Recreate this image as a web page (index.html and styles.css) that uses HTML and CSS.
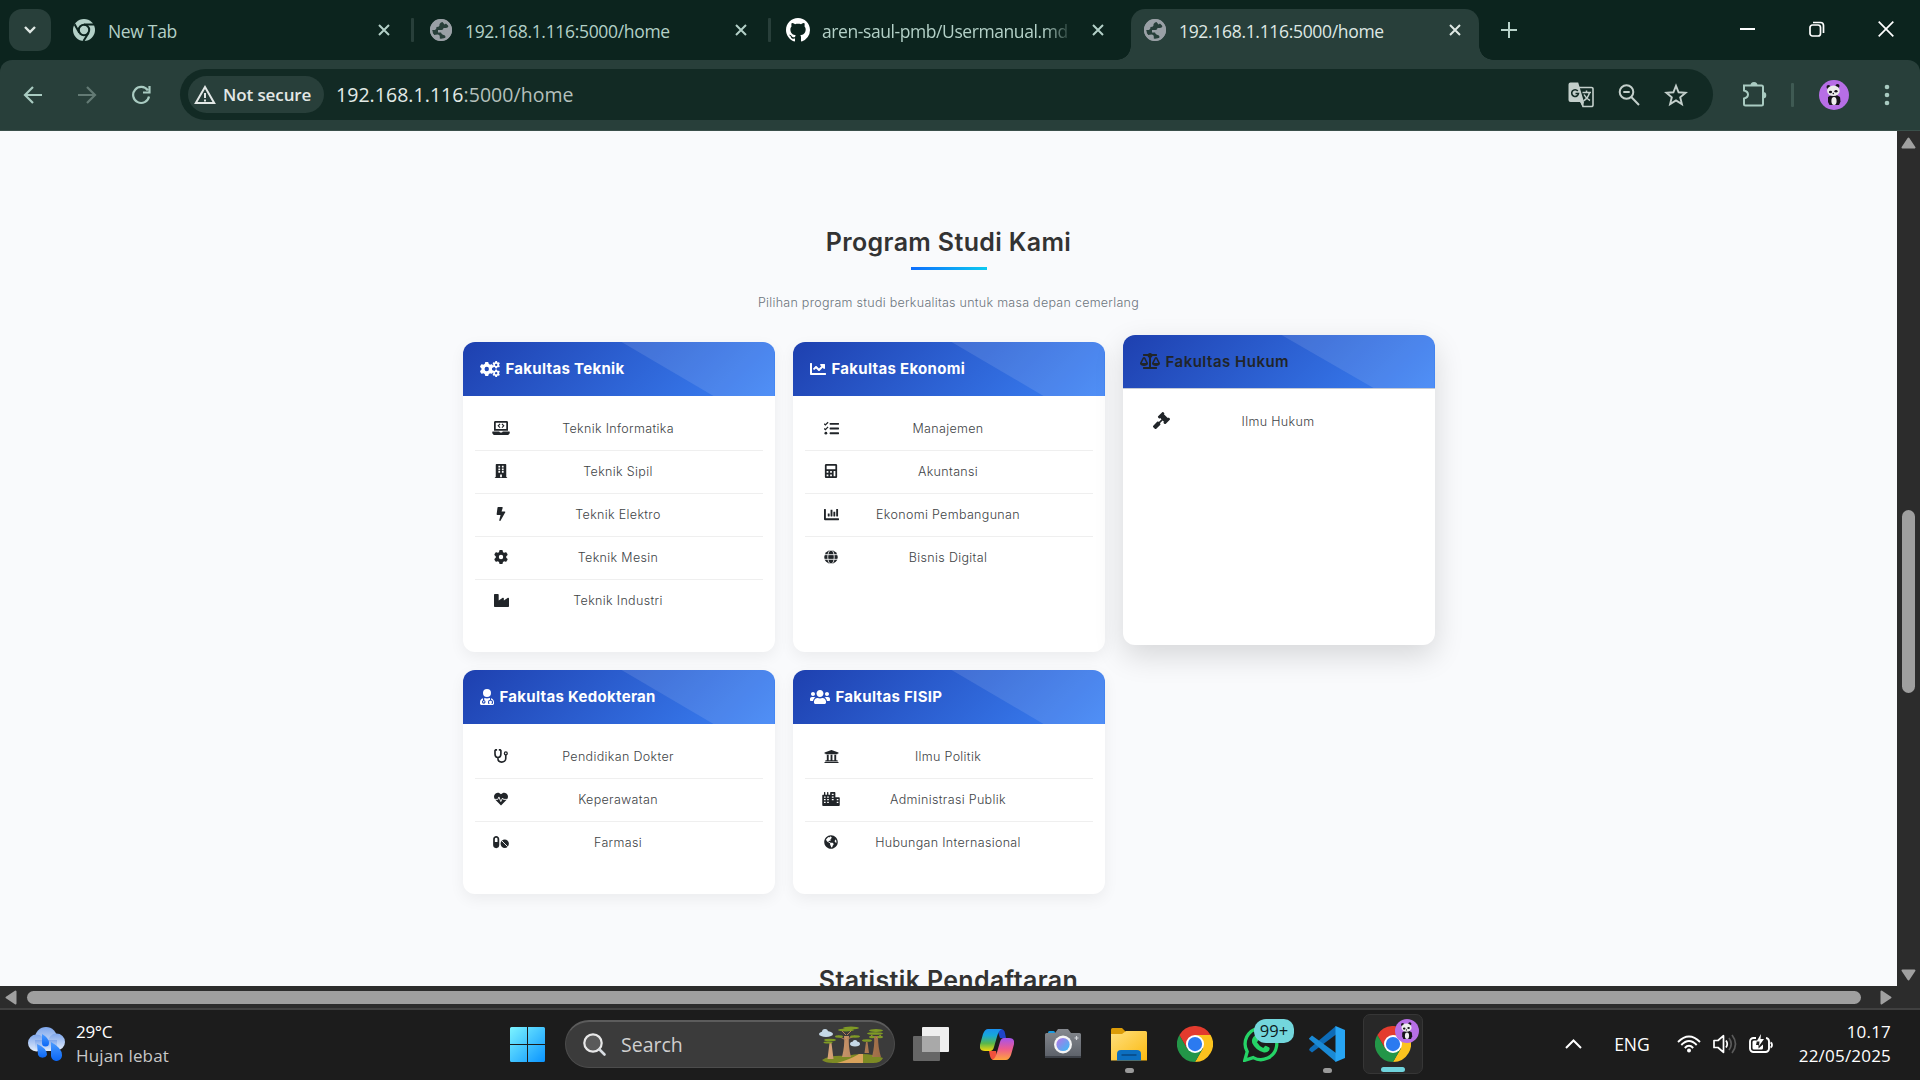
FILE: index.html
```html
<!DOCTYPE html>
<html lang="id">
<head>
<meta charset="utf-8">
<title>192.168.1.116:5000/home</title>
<link rel="stylesheet" href="styles.css">
</head>
<body>
<svg class="defs" width="0" height="0" aria-hidden="true">
  <defs>
    <symbol id="i-close" viewBox="0 0 14 14"><path d="M2 2l10 10M12 2L2 12" fill="none" stroke="currentColor" stroke-width="2"/></symbol>
    <symbol id="i-earth" viewBox="0 0 496 512"><path fill="currentColor" d="M248 8C111.03 8 0 119.03 0 256s111.03 248 248 248 248-111.03 248-248S384.97 8 248 8zm82.29 357.6c-3.9 3.88-7.99 7.95-11.31 11.28-2.99 3-5.1 6.7-6.17 10.71-1.51 5.66-2.73 11.38-4.77 16.87l-17.39 46.85c-13.76 3-28 4.69-42.65 4.69v-27.38c1.69-12.62-7.64-36.26-22.63-51.25-6-6-9.37-14.14-9.37-22.63v-32.01c0-11.64-6.27-22.34-16.46-27.97-14.37-7.95-34.81-19.06-48.81-26.11-11.48-5.78-22.1-13.14-31.65-21.75l-.8-.72a114.792 114.792 0 0 1-18.06-20.74c-9.38-13.77-24.66-36.42-34.59-51.14 20.47-45.5 57.36-82.04 103.2-101.89l24.01 12.01C203.48 89.74 216 82.01 216 70.11v-11.3c7.99-1.29 16.12-2.11 24.39-2.42l28.3 28.3c6.25 6.25 6.25 16.38 0 22.63L264 112l-10.34 10.34c-3.12 3.12-3.12 8.19 0 11.31l4.69 4.69c3.12 3.12 3.12 8.19 0 11.31l-8 8a8.008 8.008 0 0 1-5.66 2.34h-8.99c-2.08 0-4.08.81-5.58 2.27l-9.92 9.65a8.008 8.008 0 0 0-1.58 9.31l15.59 31.19c2.66 5.32-1.21 11.58-7.15 11.58h-5.64c-1.93 0-3.79-.7-5.24-1.96l-9.28-8.06a16.017 16.017 0 0 0-15.55-3.1l-31.17 10.39a11.95 11.95 0 0 0-8.17 11.34c0 4.53 2.56 8.66 6.61 10.69l11.08 5.54c9.41 4.71 19.79 7.16 30.31 7.16s22.59 27.29 32 32h66.75c8.49 0 16.62 3.37 22.63 9.37l13.69 13.69a30.503 30.503 0 0 1 8.93 21.57 46.536 46.536 0 0 1-13.72 32.98zM417 274.25c-5.79-1.45-10.84-5-14.15-9.97l-17.98-26.97a23.97 23.97 0 0 1 0-26.62l19.59-29.38c2.32-3.47 5.5-6.29 9.24-8.15l12.98-6.49C440.2 193.59 448 223.87 448 256c0 8.67-.74 17.16-1.82 25.54L417 274.25z"/></symbol>
    <symbol id="i-tabglobe" viewBox="0 0 22 22"><circle cx="11" cy="11" r="11" fill="#9aa0a6"/><path d="M12.500 3Q9 4 9.500 6.500q-.5 1.500-3 1.500.2 2-1.500 3H2q0 3 2 5l3.500-.6q2.500 0 2.300 2.600v2q4 .5 6-1.500-.3-2.500-2.800-2.800-1.500-.5-2-2.200H8v-2.500h3.500q2 0 2-2h2.500q2 0 2.500-2L16 4.500l-1.500 1z" fill="#283f3a"/><circle cx="11" cy="11" r="9.900" fill="none" stroke="#9aa0a6" stroke-width="2.200"/></symbol>
    <symbol id="i-gear" viewBox="0 0 512 512"><path fill="currentColor" fill-rule="evenodd" d="M495.9 166.6c3.200 8.700 .5 18.400-6.400 24.600l-43.300 39.400c1.100 8.300 1.700 16.800 1.700 25.400s-.6 17.100-1.700 25.400l43.300 39.400c6.900 6.200 9.600 15.900 6.400 24.600c-4.400 11.900-9.700 23.300-15.800 34.300l-4.700 8.100c-6.600 11-14 21.400-22.100 31.200c-5.900 7.200-15.700 9.600-24.500 6.800l-55.700-17.700c-13.400 10.300-28.200 18.900-44 25.400l-12.500 57.100c-2 9.100-9 16.300-18.200 17.800c-13.800 2.300-28 3.500-42.500 3.500s-28.700-1.200-42.500-3.500c-9.200-1.500-16.200-8.700-18.200-17.800l-12.500-57.100c-15.800-6.500-30.600-15.100-44-25.400L83.100 425.900c-8.800 2.800-18.600 .3-24.500-6.800c-8.100-9.800-15.500-20.200-22.100-31.200l-4.700-8.100c-6.100-11-11.400-22.400-15.800-34.300c-3.200-8.700-.5-18.400 6.400-24.600l43.300-39.400C64.600 273.100 64 264.600 64 256s.6-17.100 1.700-25.400L22.400 191.200c-6.900-6.200-9.600-15.900-6.400-24.600c4.400-11.900 9.700-23.300 15.800-34.300l4.700-8.100c6.600-11 14-21.400 22.100-31.200c5.900-7.200 15.700-9.600 24.500-6.800l55.700 17.700c13.400-10.300 28.200-18.900 44-25.400l12.500-57.100c2-9.100 9-16.300 18.200-17.800C227.300 1.200 241.500 0 256 0s28.700 1.200 42.500 3.500c9.200 1.500 16.200 8.700 18.200 17.800l12.500 57.100c15.800 6.500 30.600 15.100 44 25.400l55.700-17.700c8.800-2.800 18.600-.3 24.500 6.800c8.100 9.800 15.500 20.200 22.100 31.200l4.700 8.100c6.100 11 11.400 22.400 15.800 34.300zM256 336a80 80 0 1 0 0-160 80 80 0 1 0 0 160z"/></symbol>
    <symbol id="i-cogs" viewBox="0 0 640 512"><use href="#i-gear" x="-10" y="30" width="452" height="452"/><use href="#i-gear" x="395" y="0" width="245" height="245"/><use href="#i-gear" x="395" y="267" width="245" height="245"/></symbol>
    <symbol id="i-line" viewBox="0 0 512 512"><path fill="currentColor" d="M496 384H64V80c0-8.840-7.160-16-16-16H16C7.160 64 0 71.160 0 80v336c0 17.670 14.330 32 32 32h464c8.840 0 16-7.160 16-16v-32c0-8.840-7.160-16-16-16zM464 96H345.940c-21.380 0-32.090 25.850-16.970 40.970l32.400 32.400L288 242.750l-73.370-73.370c-12.500-12.500-32.760-12.500-45.250 0l-68.690 68.690c-6.250 6.250-6.250 16.380 0 22.630l22.620 22.620c6.250 6.250 16.380 6.250 22.630 0L192 237.250l73.370 73.370c12.500 12.500 32.760 12.500 45.250 0l96-96 32.400 32.400c15.120 15.120 40.970 4.410 40.970-16.970V112c.01-8.840-7.150-16-15.990-16z"/></symbol>
    <symbol id="i-bar" viewBox="0 0 512 512"><path fill="currentColor" d="M332.8 320h38.400c6.400 0 12.800-6.400 12.800-12.800V172.800c0-6.400-6.400-12.800-12.800-12.800h-38.400c-6.400 0-12.800 6.400-12.800 12.800v134.400c0 6.400 6.400 12.800 12.800 12.800zm96 0h38.400c6.400 0 12.800-6.400 12.800-12.800V76.800c0-6.400-6.400-12.800-12.800-12.800h-38.400c-6.400 0-12.800 6.400-12.800 12.800v230.400c0 6.400 6.400 12.800 12.800 12.800zm-288 0h38.400c6.400 0 12.800-6.400 12.800-12.800v-70.400c0-6.400-6.400-12.800-12.800-12.800h-38.400c-6.400 0-12.800 6.400-12.800 12.800v70.400c0 6.400 6.400 12.800 12.800 12.800zm96 0h38.400c6.400 0 12.800-6.400 12.800-12.800V108.800c0-6.400-6.400-12.800-12.800-12.800h-38.400c-6.400 0-12.800 6.400-12.800 12.800v198.400c0 6.400 6.400 12.800 12.800 12.800zM496 384H64V80c0-8.840-7.160-16-16-16H16C7.160 64 0 71.160 0 80v336c0 17.670 14.330 32 32 32h464c8.840 0 16-7.160 16-16v-32c0-8.840-7.160-16-16-16z"/></symbol>
    <symbol id="i-scale" viewBox="0 0 640 512"><path fill="currentColor" fill-rule="evenodd" d="M256 336c0-16 1-9-85-181-17.500-35-67.500-35-85 0C-1 330 0 320 0 336c0 44 57 80 128 80s128-36 128-80zM128 176l72 144H56zM640 336c0-16 1-9-85-181-17.500-35-67.500-35-85 0-87 175-86 165-86 181 0 44 57 80 128 80s128-36 128-80zM440 320l72-144 72 144zM528 448H352V153c23.500-10 41-31 46-57h130c9 0 16-7 16-16V48c0-9-7-16-16-16H384c-15-19-38-32-64-32s-49 13-64 32H112c-9 0-16 7-16 16v32c0 9 7 16 16 16h130c5 26 22.500 47 46 57v295H112c-9 0-16 7-16 16v32c0 9 7 16 16 16h416c9 0 16-7 16-16v-32c0-9-7-16-16-16z"/></symbol>
    <symbol id="i-gavel" viewBox="0 0 512 512"><path fill="currentColor" d="M504.971 199.362l-22.627-22.627c-9.373-9.373-24.569-9.373-33.941 0l-5.657 5.657L329.608 69.255l5.657-5.657c9.373-9.373 9.373-24.569 0-33.941L312.638 7.029c-9.373-9.373-24.569-9.373-33.941 0L154.246 131.480c-9.373 9.373-9.373 24.569 0 33.941l22.627 22.627c9.373 9.373 24.569 9.373 33.941 0l5.657-5.657 39.598 39.598-81.040 81.040-5.657-5.657c-12.497-12.497-32.758-12.497-45.255 0L9.373 412.118c-12.497 12.497-12.497 32.758 0 45.255l45.255 45.255c12.497 12.497 32.758 12.497 45.255 0l114.745-114.745c12.497-12.497 12.497-32.758 0-45.255l-5.657-5.657 81.040-81.040 39.598 39.598-5.657 5.657c-9.373 9.373-9.373 24.569 0 33.941l22.627 22.627c9.373 9.373 24.569 9.373 33.941 0l124.451-124.451c9.372-9.372 9.372-24.568 0-33.941z"/></symbol>
    <symbol id="i-users" viewBox="0 0 640 512"><path fill="currentColor" d="M96 224c35.300 0 64-28.700 64-64s-28.700-64-64-64-64 28.700-64 64 28.700 64 64 64zm448 0c35.300 0 64-28.700 64-64s-28.700-64-64-64-64 28.700-64 64 28.700 64 64 64zm32 32h-64c-17.600 0-33.500 7.100-45.100 18.600 40.300 22.100 68.900 62 75.100 109.400h66c17.700 0 32-14.300 32-32v-32c0-35.300-28.700-64-64-64zm-256 0c61.900 0 112-50.100 112-112S381.900 32 320 32 208 82.100 208 144s50.100 112 112 112zm76.800 32h-8.300c-20.800 10-43.900 16-68.500 16s-47.600-6-68.500-16h-8.300C179.600 288 128 339.600 128 403.200V432c0 26.500 21.500 48 48 48h288c26.500 0 48-21.500 48-48v-28.800c0-63.600-51.600-115.200-115.200-115.200zm-223.700-13.400C161.500 263.100 145.600 256 128 256H64c-35.300 0-64 28.700-64 64v32c0 17.700 14.300 32 32 32h65.900c6.300-47.400 34.900-87.300 75.200-109.400z"/></symbol>
    <symbol id="i-doctor" viewBox="0 0 448 512"><path fill="currentColor" fill-rule="evenodd" d="M224 256a128 128 0 1 0 0-256 128 128 0 0 0 0 256zM96 292C40 306 0 356 0 415v49c0 26 21 48 48 48h352c27 0 48-22 48-48v-49c0-59-40-109-96-123v50c37 8 64 40 64 78v50h-50v-28h18v-22c0-62-96-62-96 0v22h18v28h-50v-50c0-38 27-70 64-78v-54h-8c-55 21-121 21-176 0v70c23 7 40 28 40 54a56 56 0 1 1-112 0c0-26 17-47 32-54zM120 384a24 24 0 1 0 0 48 24 24 0 0 0 0-48z"/></symbol>
    <symbol id="i-laptop" viewBox="0 0 640 512"><path fill="currentColor" fill-rule="evenodd" d="M112 0h416c26 0 48 22 48 48v304H64V48C64 22 86 0 112 0zM128 64v224h384V64zM16 384h240c1 18 14 32 32 32h64c18 0 32-14 32-32h240c9 0 16 7 16 16v16c0 53-43 96-96 96H96c-53 0-96-43-96-96v-16c0-9 7-16 16-16z"/><path d="M285 108l-66 68 66 68M355 108l66 68-66 68" fill="none" stroke="currentColor" stroke-width="42"/></symbol>
    <symbol id="i-building" viewBox="0 0 448 512"><path fill="currentColor" fill-rule="evenodd" d="M436 480h-20V24c0-13-11-24-24-24H56C43 0 32 11 32 24v456H12c-7 0-12 5-12 12v20h448v-20c0-7-5-12-12-12zM128 64h64v64h-64zM256 64h64v64h-64zM128 160h64v64h-64zM256 160h64v64h-64zM128 256h64v64h-64zM256 256h64v64h-64zM192 384h64v96h-64z"/></symbol>
    <symbol id="i-bolt" viewBox="0 0 320 512"><path fill="currentColor" d="M296 160H180.600l42.600-129.800C227.200 15 215.700 0 200 0H56C44 0 33.800 8.900 32.200 20.800l-32 240C-1.700 275.200 9.500 288 24 288h118.700L96.600 482.500c-3.600 15.200 8 29.500 23.300 29.500 8.400 0 16.400-4.400 20.800-12l176-304c9.300-15.900-2.200-36-20.700-36z"/></symbol>
    <symbol id="i-industry" viewBox="0 0 512 512"><path fill="currentColor" d="M475.115 163.781L336 252.309v-68.280c0-18.916-20.931-30.399-36.885-20.248L160 252.309V56c0-13.255-10.745-24-24-24H24C10.745 32 0 42.745 0 56v400c0 13.255 10.745 24 24 24h464c13.255 0 24-10.745 24-24V184.029c0-18.917-20.931-30.399-36.885-20.248z"/></symbol>
    <symbol id="i-tasks" viewBox="0 0 512 512"><path d="M8 95l40 38 92-92M8 255l40 38 92-92" fill="none" stroke="currentColor" stroke-width="44"/><circle cx="64" cy="416" r="48" fill="currentColor"/><path fill="currentColor" d="M208 64h288q16 0 16 16v32q0 16-16 16H208q-16 0-16-16V80q0-16 16-16zM208 224h288q16 0 16 16v32q0 16-16 16H208q-16 0-16-16v-32q0-16 16-16zM208 384h288q16 0 16 16v32q0 16-16 16H208q-16 0-16-16v-32q0-16 16-16z"/></symbol>
    <symbol id="i-calc" viewBox="0 0 448 512"><path fill="currentColor" fill-rule="evenodd" d="M48 0h352c26 0 48 22 48 48v416c0 26-22 48-48 48H48c-26 0-48-22-48-48V48C0 22 22 0 48 0zM64 64v128h320V64zM64 256v64h64v-64zM192 256v64h64v-64zM64 384v64h64v-64zM192 384v64h64v-64zM320 256v192h64V256z"/></symbol>
    <symbol id="i-globe" viewBox="0 0 512 512"><circle cx="256" cy="256" r="248" fill="currentColor"/><g fill="none" stroke="#fff" stroke-width="30"><ellipse cx="256" cy="256" rx="118" ry="256"/><path d="M0 170h512M0 342h512"/></g></symbol>
    <symbol id="i-steth" viewBox="0 0 512 512"><path d="M112 30H62L36 60v125c0 80 50 125 108 125s108-45 108-125V60l-26-30h-50M144 310v40c0 80 60 130 136 130s150-50 150-130V208" fill="none" stroke="currentColor" stroke-width="60"/><circle cx="432" cy="160" r="52" fill="none" stroke="currentColor" stroke-width="48"/></symbol>
    <symbol id="i-heart" viewBox="0 0 512 512"><path fill="currentColor" d="M256 490L40 275C-20 210-10 110 60 55c60-45 145-30 196 30 51-60 136-75 196-30 70 55 80 155 20 220z"/><path d="M0 270h140l40-90 68 170 66-130 30 50h168" fill="none" stroke="#fff" stroke-width="32"/></symbol>
    <symbol id="i-pills" viewBox="0 0 576 512"><path fill="currentColor" fill-rule="evenodd" d="M112 32C50 32 0 82 0 144v224a112 112 0 0 0 224 0V144c0-62-50-112-112-112zM64 256V144a48 48 0 0 1 96 0v112z"/><circle cx="424" cy="320" r="152" fill="currentColor"/><path d="M316 212l216 216" stroke="#fff" stroke-width="34"/></symbol>
    <symbol id="i-bank" viewBox="0 0 512 512"><path fill="currentColor" d="M496 128v16a8 8 0 0 1-8 8h-24v12c0 6.627-5.373 12-12 12H60c-6.627 0-12-5.373-12-12v-12H24a8 8 0 0 1-8-8v-16a8 8 0 0 1 4.941-7.392l232-88a7.996 7.996 0 0 1 6.118 0l232 88A8 8 0 0 1 496 128zm-24 304H40c-13.255 0-24 10.745-24 24v16a8 8 0 0 0 8 8h464a8 8 0 0 0 8-8v-16c0-13.255-10.745-24-24-24zM96 192v192H60c-6.627 0-12 5.373-12 12v20h416v-20c0-6.627-5.373-12-12-12h-36V192h-64v192h-64V192h-64v192h-64V192H96z"/></symbol>
    <symbol id="i-city" viewBox="0 0 640 512"><path fill="currentColor" fill-rule="evenodd" d="M616 192H480V24c0-13-11-24-24-24H312c-13 0-24 11-24 24v72h-64V16c0-9-7-16-16-16h-16c-9 0-16 7-16 16v80h-64V16c0-9-7-16-16-16H80c-9 0-16 7-16 16v80H24c-13 0-24 11-24 24v360c0 18 14 32 32 32h576c18 0 32-14 32-32V216c0-13-11-24-24-24zM64 160h60v50H64zM180 160h60v50h-60zM64 256h60v50H64zM180 256h60v50h-60zM64 352h60v50H64zM180 352h60v50h-60zM350 64h66v50h-66zM350 160h66v50h-66zM350 256h66v50h-66zM530 256h60v50h-60zM530 352h60v50h-60z"/></symbol>
    <symbol id="i-chrome" viewBox="0 0 48 48"><path d="M44.800 12A24 24 0 0 1 24 48L34.400 30 24 12z" fill="#fcc31e"/><path d="M3.200 12A24 24 0 0 0 24 48L34.400 30 13.600 30z" fill="#239648"/><path d="M3.200 12A24 24 0 0 1 44.800 12H24L13.600 30z" fill="#e33b2e"/><circle cx="24" cy="24" r="12" fill="#fff"/><circle cx="24" cy="24" r="9.500" fill="#2b7af0"/></symbol>
    <symbol id="i-panda" viewBox="0 0 30 30"><circle cx="15" cy="15" r="15" fill="#b76ee6"/><path d="M9 17q6-5 12 0l.5 4.500-1.500 3.500H10.500L9 22z" fill="#17141b"/><ellipse cx="15" cy="21" rx="2.600" ry="4" fill="#eee"/><circle cx="9.500" cy="7" r="2" fill="#17141b"/><circle cx="18.500" cy="6" r="2" fill="#17141b"/><ellipse cx="14.400" cy="10.800" rx="6.300" ry="5.200" fill="#ececec"/><ellipse cx="11.500" cy="12" rx="1.600" ry="1.300" fill="#17141b"/><ellipse cx="17" cy="11.300" rx="1.600" ry="1.300" fill="#17141b"/><circle cx="14.300" cy="13.600" r=".8" fill="#17141b"/></symbol>
    <linearGradient id="g-win" x1="0" y1="0" x2="1" y2="1"><stop offset="0" stop-color="#7cf4ff"/><stop offset="1" stop-color="#0a94ff"/></linearGradient>
    <linearGradient id="g-cloud" x1="0" y1="0" x2="0" y2="1"><stop offset="0" stop-color="#7ea6ec"/><stop offset="1" stop-color="#e4eefc"/></linearGradient>
    <linearGradient id="g-drop" x1="0" y1="0" x2="0" y2="1"><stop offset="0" stop-color="#4b9bff"/><stop offset="1" stop-color="#0a66f5"/></linearGradient>
    <linearGradient id="g-copA" x1="0" y1="0" x2="0" y2="1"><stop offset="0" stop-color="#1a90f0"/><stop offset=".3" stop-color="#17a8d8"/><stop offset=".65" stop-color="#58b64c"/><stop offset="1" stop-color="#f2d70c"/></linearGradient>
    <linearGradient id="g-copB" x1="0" y1="0" x2="0" y2="1"><stop offset="0" stop-color="#a453ee"/><stop offset=".5" stop-color="#ee5b8e"/><stop offset="1" stop-color="#ffa43c"/></linearGradient>
    <linearGradient id="g-cam" x1="0" y1="0" x2="0" y2="1"><stop offset="0" stop-color="#86898f"/><stop offset="1" stop-color="#5b6068"/></linearGradient>
    <linearGradient id="g-lens" x1="0" y1="0" x2="1" y2="1"><stop offset="0" stop-color="#b873e6"/><stop offset="1" stop-color="#35bdf5"/></linearGradient>
    <linearGradient id="g-fold" x1="0" y1="0" x2="1" y2="1"><stop offset="0" stop-color="#ffe07e"/><stop offset="1" stop-color="#fbb90f"/></linearGradient>
    <linearGradient id="g-trunk" x1="0" y1="0" x2="1" y2="0"><stop offset="0" stop-color="#d6a377"/><stop offset="1" stop-color="#9c6b45"/></linearGradient>
  </defs>
</svg>

<header class="tabstrip">
  <div class="tab-search"><svg width="14" height="10" viewBox="0 0 14 10"><path d="M2 2l5 5 5-5" fill="none" stroke="#dfe8e4" stroke-width="2.400"/></svg></div>
  <div class="tab">
    <svg class="favicon" viewBox="0 0 22 22"><circle cx="11" cy="11" r="11" fill="#b3d0c7"/><circle cx="11" cy="11" r="5.200" fill="#b3d0c7" stroke="#0c241e" stroke-width="2"/><path d="M11 5.400h10M6.300 13.800L1.600 5.200M15.600 13.800L10.500 22" stroke="#0c241e" stroke-width="2"/></svg>
    <span class="tab-title">New Tab</span><svg class="tab-x"><use href="#i-close"/></svg><i class="tab-sep"></i>
  </div>
  <div class="tab">
    <svg class="favicon"><use href="#i-tabglobe"/></svg>
    <span class="tab-title">192.168.1.116:5000/home</span><svg class="tab-x"><use href="#i-close"/></svg><i class="tab-sep"></i>
  </div>
  <div class="tab">
    <svg class="favicon github" viewBox="0 0 16 16"><path fill="#fff" d="M8 0C3.580 0 0 3.580 0 8c0 3.540 2.290 6.530 5.470 7.590.4.070.55-.17.55-.38 0-.19-.01-.82-.01-1.490-2.010.37-2.530-.49-2.690-.94-.09-.23-.48-.94-.82-1.130-.28-.15-.68-.52-.01-.53.63-.01 1.080.58 1.230.82.72 1.210 1.870.87 2.330.66.07-.52.28-.87.51-1.070-1.780-.2-3.640-.89-3.640-3.950 0-.87.31-1.590.82-2.150-.08-.2-.36-1.020.08-2.120 0 0 .67-.21 2.200.82.64-.18 1.320-.27 2-.27s1.360.09 2 .27c1.530-1.040 2.200-.82 2.200-.82.44 1.100.16 1.920.08 2.120.51.56.82 1.270.82 2.150 0 3.070-1.870 3.750-3.650 3.950.29.25.54.73.54 1.480 0 1.070-.01 1.930-.01 2.200 0 .21.15.46.55.38A8.010 8.010 0 0 0 16 8c0-4.420-3.580-8-8-8z"/></svg>
    <span class="tab-title fade">aren-saul-pmb/Usermanual.md</span><svg class="tab-x"><use href="#i-close"/></svg>
  </div>
  <div class="tab active">
    <svg class="favicon"><use href="#i-tabglobe"/></svg>
    <span class="tab-title">192.168.1.116:5000/home</span><svg class="tab-x"><use href="#i-close"/></svg>
  </div>
  <svg class="new-tab" width="16" height="16" viewBox="0 0 16 16"><path d="M8 0v16M0 8h16" stroke="#b9d2ca" stroke-width="2"/></svg>
  <div class="win-controls">
    <svg width="16" height="16" viewBox="0 0 16 16"><path d="M0 8h15" stroke="#fff" stroke-width="2"/></svg>
    <svg width="16" height="16" viewBox="0 0 16 16" fill="none" stroke="#fff" stroke-width="1.700"><rect x="1" y="4" width="10.500" height="11" rx="2.500"/><path d="M4 1.500h7.500a3 3 0 0 1 3 3V12"/></svg>
    <svg width="16" height="16" viewBox="0 0 16 16"><path d="M.7.7l14.600 14.600M15.300.7L.7 15.300" stroke="#fff" stroke-width="1.700"/></svg>
  </div>
</header>

<nav class="toolbar">
  <svg class="nav-icon" viewBox="0 0 20 20"><path d="M19 10H2M10 2l-8 8 8 8" fill="none" stroke="#a9cbc1" stroke-width="2.200"/></svg>
  <svg class="nav-icon" viewBox="0 0 20 20"><path d="M1 10h17M10 2l8 8-8 8" fill="none" stroke="#637a74" stroke-width="2.200"/></svg>
  <svg class="nav-icon" viewBox="0 0 20 20"><path d="M16.800 5.500A8 8 0 1 0 18 11.500M18.500 1v6.500H12" fill="none" stroke="#a9cbc1" stroke-width="2.200"/></svg>
  <div class="omnibox">
    <div class="chip"><svg width="22" height="20" viewBox="0 0 22 20"><path d="M11 2L1.800 18h18.400z" fill="none" stroke="#e3e8e6" stroke-width="2"/><path d="M11 8v5M11 14.500v2" stroke="#e3e8e6" stroke-width="2"/></svg><span>Not secure</span></div>
    <span class="url">192.168.1.116<span class="url-rest">:5000/home</span></span>
    <div class="omni-icons">
      <svg width="26" height="26" viewBox="0 0 26 26"><path d="M10 5.500h13.500a1.500 1.500 0 0 1 1.500 1.500v16a1.500 1.500 0 0 1-1.500 1.500H15L10 11" fill="none" stroke="#c3cfcb" stroke-width="1.600"/><path d="M2.500.5h7.700L16 20H2.500a2 2 0 0 1-2-2V2.500a2 2 0 0 1 2-2zM12 20l3 5 1-5z" fill="#c3cfcb"/><path d="M9.800 9a3.400 3.400 0 1 0 .7 2.500H7.500" fill="none" stroke="#122a24" stroke-width="1.600"/><path d="M14.500 10.500H23M18.500 8.500v2M21.500 10.500q-1 5-6 8.500M16 12.500q2 4 6 6" fill="none" stroke="#c3cfcb" stroke-width="1.500"/></svg>
      <svg width="22" height="22" viewBox="0 0 22 22"><circle cx="8.500" cy="8" r="6.800" fill="none" stroke="#c3cfcb" stroke-width="2"/><path d="M5.300 8h6.400M13.300 13l7.700 8" stroke="#c3cfcb" stroke-width="2"/></svg>
      <svg width="24" height="24" viewBox="0 0 24 24"><path d="M12 2.800l2.600 6.500 7 .5-5.400 4.500 1.700 6.800L12 17.400l-5.900 3.700 1.700-6.800L2.400 9.800l7-.5z" fill="none" stroke="#c3cfcb" stroke-width="1.900"/></svg>
    </div>
  </div>
  <svg class="puzzle" width="26" height="26" viewBox="0 0 26 26"><path d="M3 4.500h17.500q1.500 0 1.500 1.500v17q0 1.500-1.500 1.500H4.500Q3 24.500 3 23v-5.500q4-1 4-4t-4-4z" fill="none" stroke="#a9cbc1" stroke-width="2"/><path d="M9.500 4.500a3.500 3.500 0 0 1 7 0zM22 11a3.300 3.300 0 0 1 0 6.600z" fill="#a9cbc1"/></svg>
  <i class="bar-sep"></i>
  <svg class="avatar" width="30" height="30"><use href="#i-panda"/></svg>
  <svg class="dots" width="6" height="22" viewBox="0 0 6 22" fill="#a9cbc1"><circle cx="3" cy="3" r="2.300"/><circle cx="3" cy="11" r="2.300"/><circle cx="3" cy="19" r="2.300"/></svg>
</nav>

<div class="viewport">
  <main class="page">
    <h2 class="section-title">Program Studi Kami</h2>
    <div class="underline"></div>
    <p class="lead">Pilihan program studi berkualitas untuk masa depan cemerlang</p>
    <div class="cards">
      <article class="card">
        <h3 class="card-head"><svg class="w20"><use href="#i-cogs"/></svg><span>Fakultas Teknik</span></h3>
        <ul class="list">
          <li><svg class="w20"><use href="#i-laptop"/></svg><span>Teknik Informatika</span></li>
          <li><svg><use href="#i-building"/></svg><span>Teknik Sipil</span></li>
          <li><svg><use href="#i-bolt"/></svg><span>Teknik Elektro</span></li>
          <li><svg><use href="#i-gear"/></svg><span>Teknik Mesin</span></li>
          <li><svg class="w16"><use href="#i-industry"/></svg><span>Teknik Industri</span></li>
        </ul>
      </article>
      <article class="card">
        <h3 class="card-head"><svg class="w16"><use href="#i-line"/></svg><span>Fakultas Ekonomi</span></h3>
        <ul class="list">
          <li><svg class="w16"><use href="#i-tasks"/></svg><span>Manajemen</span></li>
          <li><svg><use href="#i-calc"/></svg><span>Akuntansi</span></li>
          <li><svg class="w16"><use href="#i-bar"/></svg><span>Ekonomi Pembangunan</span></li>
          <li><svg><use href="#i-globe"/></svg><span>Bisnis Digital</span></li>
        </ul>
      </article>
      <article class="card raised">
        <h3 class="card-head"><svg class="w20"><use href="#i-scale"/></svg><span>Fakultas Hukum</span></h3>
        <ul class="list">
          <li><svg class="big"><use href="#i-gavel"/></svg><span>Ilmu Hukum</span></li>
        </ul>
      </article>
      <article class="card">
        <h3 class="card-head"><svg class="w14"><use href="#i-doctor"/></svg><span>Fakultas Kedokteran</span></h3>
        <ul class="list">
          <li><svg><use href="#i-steth"/></svg><span>Pendidikan Dokter</span></li>
          <li><svg><use href="#i-heart"/></svg><span>Keperawatan</span></li>
          <li><svg class="w20"><use href="#i-pills"/></svg><span>Farmasi</span></li>
        </ul>
      </article>
      <article class="card">
        <h3 class="card-head"><svg class="w20"><use href="#i-users"/></svg><span>Fakultas FISIP</span></h3>
        <ul class="list">
          <li><svg class="w16"><use href="#i-bank"/></svg><span>Ilmu Politik</span></li>
          <li><svg class="w20"><use href="#i-city"/></svg><span>Administrasi Publik</span></li>
          <li><svg><use href="#i-earth"/></svg><span>Hubungan Internasional</span></li>
        </ul>
      </article>
    </div>
    <h2 class="section-title next">Statistik Pendaftaran</h2>
  </main>
  <div class="vscroll">
    <svg width="15" height="12" viewBox="0 0 15 12"><path d="M7.500 1.500L13.500 10.500h-12z" fill="#a0a0a0" stroke="#a0a0a0" stroke-width="2" stroke-linejoin="round"/></svg>
    <div class="vthumb"></div>
    <svg width="15" height="12" viewBox="0 0 15 12"><path d="M7.500 10.500L13.500 1.500h-12z" fill="#a0a0a0" stroke="#a0a0a0" stroke-width="2" stroke-linejoin="round"/></svg>
  </div>
</div>
<div class="hscroll">
  <svg width="12" height="15" viewBox="0 0 12 15"><path d="M1.500 7.500L10.500 1.500v12z" fill="#a0a0a0" stroke="#a0a0a0" stroke-width="2" stroke-linejoin="round"/></svg>
  <div class="hthumb"></div>
  <svg width="12" height="15" viewBox="0 0 12 15"><path d="M10.500 7.500L1.500 1.500v12z" fill="#a0a0a0" stroke="#a0a0a0" stroke-width="2" stroke-linejoin="round"/></svg>
</div>

<footer class="taskbar">
  <div class="weather">
    <svg width="37" height="34" viewBox="0 0 37 34"><g fill="url(#g-cloud)"><circle cx="18" cy="11" r="11"/><circle cx="8.500" cy="16" r="8.500"/><circle cx="28.500" cy="15" r="8.500"/><rect x="7" y="13" width="22" height="11"/></g><g fill="url(#g-drop)"><path d="M14 7q7 4 7 9a3.500 3.500 0 0 1-7 0z"/><path d="M9 17q10 4 10 11a5 5 0 0 1-9 0z"/><path d="M23 15q11 6 11 13a5 5 0 0 1-11 1z"/></g></svg>
    <div class="weather-text"><span class="deg">29°C</span><span class="dim">Hujan lebat</span></div>
  </div>
  <svg class="start" width="35" height="35" viewBox="0 0 35 35" fill="url(#g-win)"><path d="M1.500 0H17v17H0V1.500A1.500 1.500 0 0 1 1.500 0zM18 0h15.500A1.500 1.500 0 0 1 35 1.500V17H18zM0 18h17v17H1.500A1.500 1.500 0 0 1 0 33.500zM18 18h17v15.500a1.500 1.500 0 0 1-1.500 1.500H18z"/></svg>
  <div class="search">
    <svg width="24" height="24" viewBox="0 0 24 24"><circle cx="10" cy="10" r="8.700" fill="#5a5a5a" stroke="#e8e8e8" stroke-width="2.200"/><path d="M16.500 16.500l5 5" stroke="#d8dde2" stroke-width="2.600" stroke-linecap="round"/></svg>
    <span>Search</span>
    <svg class="trees" width="66" height="38" viewBox="0 0 66 38"><path d="M3 34q8-5 24-4 20-5 37 2-2 5-10 5H14q-8 0-11-3z" fill="#7d8a24"/><path d="M18 37q12-3 22-9h4v9z" fill="#d9a35c"/><g fill="url(#g-trunk)"><path d="M23 31q3-12 2-21h5q-1 10 2 21zM8.500 33L10.500 17h2L14.500 33zM53 31q3-12 2-21h4q0 12 3 21zM45.500 27l1.500-11h1.500l1.500 11z"/></g><g fill="none" stroke="#b5805a" stroke-width="1"><path d="M27 14l-8-4M28 13l8-3M28 9l5-5M27 9l-5-5M56 12l-4-3M57 12l5-3"/></g><g fill="#7f9a25"><ellipse cx="27" cy="4" rx="8" ry="1.500"/><ellipse cx="32" cy="2" rx="8" ry="1.500"/><ellipse cx="20" cy="10.500" rx="4" ry="1.200"/><ellipse cx="36" cy="10.500" rx="5" ry="1.200"/><ellipse cx="11" cy="14" rx="6" ry="1.300"/><ellipse cx="9" cy="16.500" rx="4.500" ry="1"/><ellipse cx="57" cy="4.500" rx="7" ry="1.500"/><ellipse cx="56" cy="7.500" rx="8" ry="1.300"/><ellipse cx="53" cy="11" rx="3" ry="1.200"/><ellipse cx="61" cy="11" rx="3" ry="1.200"/><ellipse cx="48" cy="14.500" rx="5" ry="1.300"/></g><g fill="#c5d8e6"><ellipse cx="7" cy="8" rx="7" ry="3"/><circle cx="6" cy="6" r="3"/><ellipse cx="36" cy="18" rx="5" ry="2.400"/><circle cx="36" cy="16.500" r="2.500"/></g></svg>
  </div>
  <div class="apps">
    <div class="app"><svg width="36" height="34" viewBox="0 0 36 34"><rect x="0" y="9" width="27" height="25" rx="1" fill="#666"/><rect x="9" y="0" width="27" height="25" rx="1" fill="#efefef"/><rect x="9" y="9" width="18" height="16" fill="#a9a9a9"/></svg></div>
    <div class="app"><svg width="34" height="31" viewBox="0 0 34 31"><path d="M17 0h4q3 0 4 4l1 5h-6z" fill="#1f45c8"/><path d="M9 22h7l1 5q1 4 4 4h-7q-3 0-4-4z" fill="#f0513c"/><path d="M8 0h14q-3 1-4.500 6L14 18q-1 4-4 4H5q-7 0-4.500-8L3 5q2-5 5-5z" fill="url(#g-copA)"/><path d="M26 31H12q3-1 4.500-6L20 13q1-4 4-4h5q7 0 4.500 8L31 26q-2 5-5 5z" fill="url(#g-copB)"/></svg></div>
    <div class="app"><svg width="36" height="30" viewBox="0 0 36 30"><rect x="3" y="2" width="7" height="4" rx="1.500" fill="#1a9be0"/><path d="M1.500 4H10l3-4h10l3 4h8.500Q36 4 36 5.500V29H0V5.500Q0 4 1.500 4z" fill="url(#g-cam)"/><path d="M0 27h36v2H0z" fill="#3d4148"/><circle cx="18" cy="15.500" r="9" fill="#f4f4f4"/><circle cx="18" cy="15.500" r="6.600" fill="url(#g-lens)"/><path d="M31.500 7v4M29.500 9h4" stroke="#d5d8dc" stroke-width="1.200"/></svg></div>
    <div class="app"><svg width="36" height="33" viewBox="0 0 36 33"><path d="M0 1.500Q0 0 1.500 0H11l4 4v4H0z" fill="#dc9c08"/><path d="M0 6h11l4-3h19.500Q36 3 36 4.500V32.500H0z" fill="url(#g-fold)"/><path d="M6 32.500V26q0-4 4-4h16q4 0 4 4v6.500z" fill="#0c6fc0"/><path d="M10.500 27h15" stroke="#084b86" stroke-width="1.600"/></svg><i class="run"></i></div>
    <div class="app"><svg width="36" height="36"><use href="#i-chrome"/></svg></div>
    <div class="app"><svg width="36" height="36" viewBox="0 0 36 36"><path d="M1.800 34.300l2.400-8.700a15.800 15.800 0 1 1 6 6z" fill="none" stroke="#25d366" stroke-width="3.300"/><path d="M12 9.500q1.500-.6 2.200 1l1.200 2.900q.3 1-1.500 2.900 2.300 4 6.400 5.600 1.800-2.300 2.500-2.100l3.500 1.700q.9.600-.2 3-2 2.500-5.200 2-8.200-2-11.700-9.500-1.300-4.500 2.800-7.500z" fill="#25d366"/></svg><span class="badge">99+</span></div>
    <div class="app"><svg width="36" height="36" viewBox="0 0 36 36"><path d="M0 24l3 2.500 24-18V0L1 22z" fill="#0d6cb8"/><path d="M0 12.500L3 9.500 27 27v9L0 13z" fill="#1a8ad6"/><path d="M26.500 0L36 4v28l-9.500 4z" fill="#27a5f4"/></svg><i class="run"></i></div>
    <div class="app"><div class="app-on"><svg width="36" height="36"><use href="#i-chrome"/></svg><svg class="mini" width="24" height="24" viewBox="0 0 30 30"><use href="#i-panda"/></svg><i class="run wide"></i></div></div>
  </div>
  <div class="tray">
    <svg class="chev" width="17" height="10" viewBox="0 0 17 10"><path d="M1 9l7.500-7.500L16 9" fill="none" stroke="#fff" stroke-width="2"/></svg>
    <span class="lang">ENG</span>
    <svg class="wifi" width="24" height="18" viewBox="0 0 24 18" fill="none" stroke="#fff" stroke-width="1.900"><path d="M1 7q11-11 22 0M4.300 10q7.700-8 15.400 0M7.800 13q4.200-4.400 8.400 0"/><circle cx="12" cy="15.500" r="2" fill="#fff" stroke="none"/></svg>
    <svg class="vol" width="24" height="20" viewBox="0 0 24 20" fill="none" stroke="#fff" stroke-width="1.700"><path d="M1 6.500h4l5.500-4.800v16.600L5 13.500H1z" stroke-linejoin="round"/><path d="M13 6.500q2.500 3.500 0 7"/><path d="M16 4q4.500 6 0 12M19 1q7 9 0 18" stroke="#5a5a5a"/></svg>
    <svg class="batt" width="24" height="20" viewBox="0 0 24 20"><path d="M7 4H4.500A3.500 3.500 0 0 0 1 7.500v7A3.500 3.500 0 0 0 4.500 18h12a3.500 3.500 0 0 0 3.500-3.500v-7A3.500 3.500 0 0 0 17 4M21.500 8.500q1.500.5 1.500 2.500t-1.500 2.500" fill="none" stroke="#fff" stroke-width="1.900"/><path d="M3.500 8q0-1.500 1.500-1.500h3L7 11h2.500v3.500l4.500-4v3.500q0 1.500-1.500 1.500H5q-1.500 0-1.500-1.500z" fill="#fff"/><path d="M12 0L7.500 7.500h3L10 12l5-7h-3.500z" fill="#fff"/></svg>
    <div class="clock"><span>10.17</span><span>22/05/2025</span></div>
  </div>
</footer>
</body>
</html>
```
FILE: styles.css
```css
* { box-sizing: border-box; }
body {
  margin: 0;
  width: 1920px;
  height: 1080px;
  overflow: hidden;
  background: #0c241e;
  font-family: "Open Sans", "Noto Sans", sans-serif;
}
svg { display: block; flex: none; }
.defs { position: absolute; }

/* Tab strip */
.tabstrip { display: flex; height: 60px; background: #0c241e; }
.tab-search {
  display: flex; align-items: center; justify-content: center;
  width: 42px; height: 42px; margin: 9px 9px 0;
  border-radius: 13px; background: #283f3a;
}
.tab {
  position: relative;
  display: flex; align-items: center; flex: none;
  width: 357px; height: 51px; margin-top: 9px; padding: 0 0 9px 13px;
  color: #b3d0c7; font-size: 17.500px;
}
.favicon { width: 22px; height: 22px; margin-right: 13px; }
.favicon.github { width: 24px; height: 24px; margin: 0 12px 0 -1px; }
.tab-title { flex: none; width: 252px; line-height: 24px; white-space: nowrap; overflow: hidden; padding-top: 4px; height: 30px; letter-spacing: -0.320px; }
.fade { letter-spacing: -0.420px; -webkit-mask-image: linear-gradient(90deg, #000 222px, transparent 252px); mask-image: linear-gradient(90deg, #000 222px, transparent 252px); }
.tab-x { width: 14px; height: 14px; margin-left: 17px; }
.tab-sep { width: 3px; height: 24px; margin-left: 20px; background: #283f3a; border-radius: 1px; }
.tab.active { width: 348px; color: #dfe8e4; background: #283f3a; border-radius: 14px 14px 0 0; }
.tab.active::before, .tab.active::after {
  content: ""; position: absolute; bottom: 0; width: 14px; height: 14px;
}
.tab.active::before { left: -14px; background: radial-gradient(circle at 0 0, transparent 13.500px, #283f3a 14px); }
.tab.active::after { right: -14px; background: radial-gradient(circle at 100% 0, transparent 13.500px, #283f3a 14px); }
.new-tab { margin: 22px 0 0 22px; }
.win-controls { display: flex; gap: 53px; margin: 21px 26px 0 auto; }

/* Toolbar */
.toolbar {
  display: flex; align-items: center;
  height: 71px; padding: 0 30px 1px 23px;
  background: #283f3a; border-radius: 12px 12px 0 0; border-bottom: 1px solid #3a4f4a;
}
.nav-icon { width: 20px; height: 20px; margin-right: 34px; }
.omnibox {
  display: flex; align-items: center;
  width: 1533px; height: 51px; margin-left: -5px; padding: 0 25px 0 8px;
  border-radius: 26px; background: #122a24;
}
.chip {
  display: flex; align-items: center;
  width: 136px; height: 37px; padding-left: 6px; gap: 7px;
  border-radius: 19px; background: #283f3a;
  color: #e3e8e6; font-size: 17px; font-weight: 600; letter-spacing: -0.100px; white-space: nowrap;
}
.url { margin-left: 12px; font-size: 19.500px; color: #e3eae7; letter-spacing: 0.050px; }
.url-rest { color: #b4c0bc; }
.omni-icons { display: flex; align-items: center; gap: 24px; margin-left: auto; }
.puzzle { margin: -2px 0 0 28px; }
.bar-sep { width: 3px; height: 24px; margin-left: 24px; background: #3f5a53; border-radius: 1px; }
.avatar { margin-left: 25px; }
.dots { margin-left: 35px; }

/* Page */
.viewport { display: flex; height: 855px; }
.page {
  width: 1897px; height: 855px; overflow: hidden;
  padding-top: 94px; background: #f9fafc;
  display: flex; flex-direction: column; align-items: center;
}
.section-title {
  margin: 0; flex: none; height: 36px; line-height: 35px;
  font-family: "Inter", sans-serif; font-size: 25px; font-weight: 600; color: #333; white-space: nowrap;
  letter-spacing: 0.350px;
}
.section-title.next { margin-top: 69px; }
.underline { flex: none; width: 76px; height: 3px; margin-top: 6px; background: linear-gradient(90deg, #0d6efd, #0dcaf0); }
.lead {
  flex: none; margin: 23px 0 29px; height: 20px; line-height: 20px;
  font-family: "Inter", sans-serif; font-size: 12.500px; font-weight: 350; color: #6c757d; white-space: nowrap; letter-spacing: 0.270px;
}
.cards {
  flex: none; display: grid;
  grid-template-columns: repeat(3, 312px); grid-template-rows: 310px 224px;
  gap: 18px; width: 972px;
}
.card { overflow: hidden; border-radius: 12px; background: #fff; box-shadow: 0 5px 15px rgba(0, 0, 0, 0.060); }
.card.raised { transform: translateY(-7px); box-shadow: 0 11px 30px rgba(0, 0, 0, 0.140); }
.card-head {
  position: relative;
  display: flex; align-items: center;
  height: 54px; margin: 0; padding: 0 17px 1px;
  background: linear-gradient(135deg, #1e40af, #3b82f6);
  font-family: "Inter", sans-serif; font-size: 15px; font-weight: 700; color: #fff; white-space: nowrap;
  letter-spacing: 0.300px;
}
.card-head::after {
  content: ""; position: absolute; inset: 0;
  background: rgba(255, 255, 255, 0.110);
  clip-path: polygon(159px 0, 100% 0, 100% 100%, 251px 100%);
}
.raised .card-head { color: #212529; font-weight: 600; border-bottom: 1px solid #c5cbd6; letter-spacing: 0.500px; }
.card-head svg { height: 16px; margin-right: 6px; }
.card-head .w20 { width: 20px; height: 16px; }
.card-head .w16 { width: 16px; }
.card-head .w14 { width: 14px; }
.list { margin: 0; padding: 12px 12px 0; list-style: none; }
.list li {
  display: grid; grid-template-columns: 53px 181px; align-items: center;
  height: 43px; border-bottom: 1px solid #efefef;
  font-family: "Inter", sans-serif; font-size: 12.500px; font-weight: 350; color: #404346; letter-spacing: 0.330px;
}
.list li:last-child { border-bottom-color: transparent; }
.list svg { justify-self: center; width: 14px; height: 14px; margin-top: -2px; color: #212529; }
.list .w16 { width: 15px; height: 15px; }
.list .w20 { width: 18px; height: 14px; }
.list .big { width: 17px; height: 17px; margin-top: -4px; }
.list span { text-align: center; white-space: nowrap; margin-top: -2px; }

/* Scrollbars */
.vscroll { width: 23px; padding: 6px 0 5px; background: #2c2c2c; display: flex; flex-direction: column; align-items: center; }
.vthumb { width: 13px; height: 183px; margin: 361px 0 auto; border-radius: 7px; background: #9f9f9f; }
.hscroll { display: flex; align-items: center; height: 22px; padding: 1px 28px 0 5px; background: #2c2c2c; }
.hthumb { width: 1834px; height: 13px; margin: 0 auto 0 10px; border-radius: 7px; background: #9f9f9f; }

/* Taskbar */
.taskbar { display: flex; align-items: center; height: 72px; padding-bottom: 2px; background: #1c1c1c; border-top: 2px solid #404040; color: #fff; }
.weather { display: flex; align-items: center; gap: 11px; width: 481px; padding-left: 28px; }
.weather-text { display: flex; flex-direction: column; font-size: 17px; line-height: 24px; }
.deg { letter-spacing: -0.300px; }
.dim { color: #c8c8c8; letter-spacing: 0.150px; }
.start { margin-left: 29px; }
.search {
  display: flex; align-items: center;
  width: 330px; height: 48px; margin: 0 3px 0 20px; padding: 0 9px 0 17px;
  border: 1px solid #4c4c4c; border-top: 2px solid #5c5c5c; border-radius: 24px; background: #3b3b3b;
  font-size: 19.500px; color: #cfcfcf;
}
.search span { margin-left: 14px; }
.trees { margin-left: auto; }
.apps { display: flex; height: 69px; }
.app { position: relative; display: flex; align-items: center; justify-content: center; width: 66px; height: 69px; }
.run { position: absolute; left: 50%; bottom: 6px; width: 9px; height: 5px; margin-left: -4px; border-radius: 3px; background: #9a9a9a; }
.run.wide { bottom: 1px; width: 24px; margin-left: -12px; background: #6fd3dc; }
.app-on {
  position: relative; display: flex; align-items: center; justify-content: center;
  width: 60px; height: 60px; border: 1px solid #363636; border-radius: 7px; background: #282828;
}
.mini { position: absolute; left: 31px; top: 4px; }
.badge {
  position: absolute; left: 26px; top: 9px; width: 40px; height: 24px;
  border-radius: 12px 10px 10px 12px; background: #73d6dc; color: #0d1b1d;
  font-size: 16.500px; line-height: 24px; text-align: center;
}
.tray { display: flex; align-items: center; margin-left: auto; padding-right: 29px; }
.chev { margin-right: 32px; }
.lang { margin-right: 27px; font-size: 17.500px; }
.wifi { margin-right: 12px; }
.vol { margin-right: 12px; }
.batt { margin-right: 26px; }
.clock { display: flex; flex-direction: column; align-items: flex-end; font-size: 17px; line-height: 24px; letter-spacing: 0.200px; }
```
